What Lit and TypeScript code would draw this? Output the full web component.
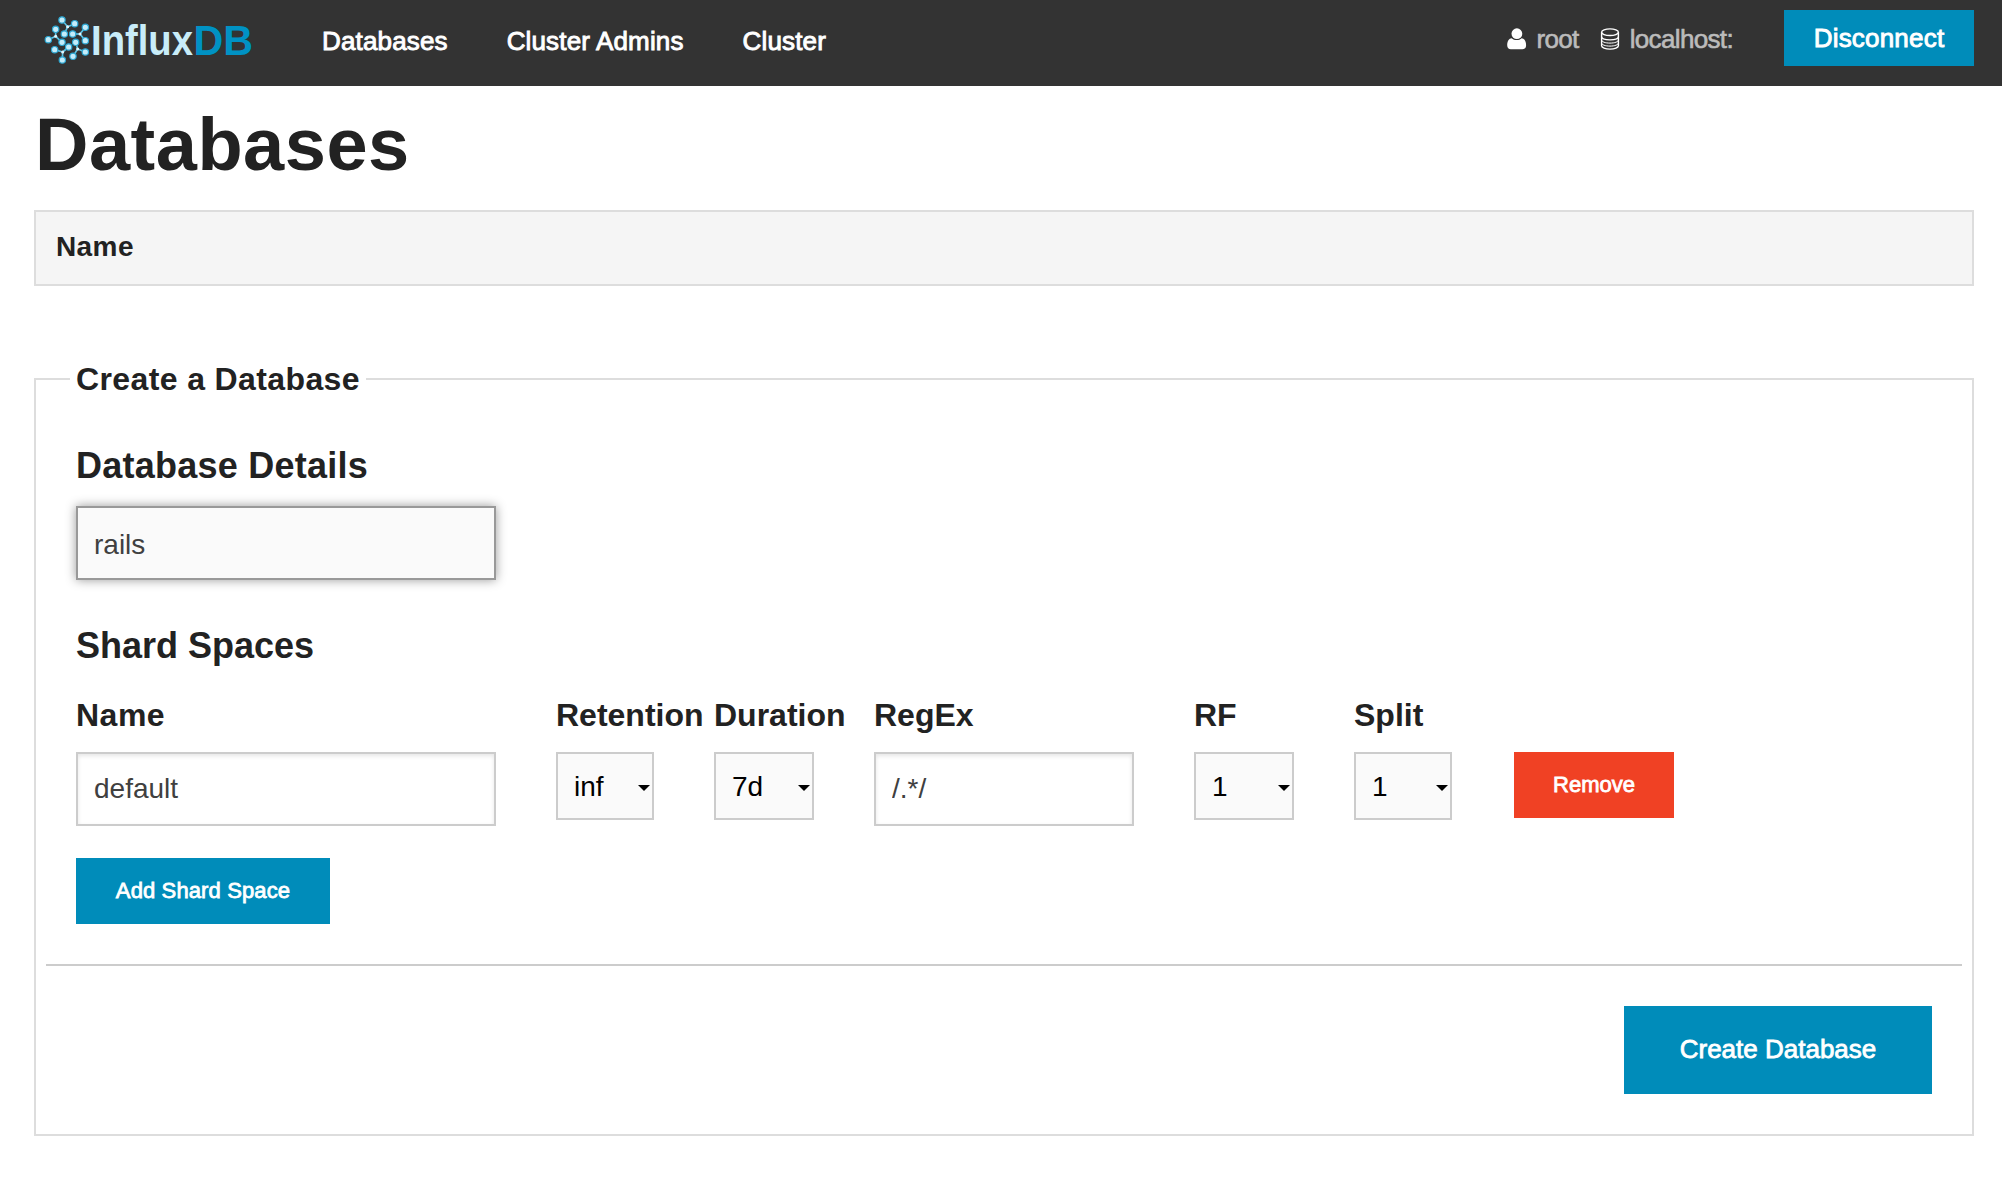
import { LitElement, html, svg, css } from "lit";
import { customElement, property } from "lit/decorators.js";

const baseFont = css`
  :host {
    font-family: "Helvetica Neue", "Liberation Sans", Arial, sans-serif;
  }
`;

// Each branch of the logo mark: a hub joined to three nodes.
const BRANCHES: { hub: [number, number]; nodes: [number, number][] }[] = [
  { hub: [203, 80], nodes: [[186, 60], [224, 71], [193, 102]] },
  { hub: [240, 102], nodes: [[218, 102], [256, 82], [256, 122]] },
  { hub: [167, 109], nodes: [[145, 119], [167, 88], [186, 127]] },
  { hub: [188, 156], nodes: [[164, 149], [206, 141], [187, 180]] },
  { hub: [233, 147], nodes: [[227, 127], [219, 169], [256, 156]] },
];

@customElement("influx-logo")
export class InfluxLogo extends LitElement {
  static styles = [
    baseFont,
    css`
      :host { display: block; width: 216px; height: 60px; }
      .logo { display: block; }
      .word { font-size: 43px; font-weight: 700; }
      .light { fill: #c9edf9; }
      .blue { fill: #0092c4; }
      .link { stroke: #5cc4e6; stroke-width: 5; }
      .node { fill: #c4ecfa; stroke: #2aa6d2; stroke-width: 3.5; }
      .hub { fill: #e2f6fd; }
    `,
  ];

  render() {
    return html`<svg class="logo" width="216" height="60" viewBox="40 10 216 60">
      <g transform="scale(0.33333)">
        ${BRANCHES.map((b) => b.nodes.map((n) => svg`<line class="link" x1=${b.hub[0]} y1=${b.hub[1]} x2=${n[0]} y2=${n[1]}></line>`))}
        ${BRANCHES.map((b) => b.nodes.map((n) => svg`<circle class="node" cx=${n[0]} cy=${n[1]} r="9.5"></circle>`))}
        ${BRANCHES.map((b) => svg`<circle class="hub" cx=${b.hub[0]} cy=${b.hub[1]} r="4.5"></circle>`)}
      </g>
      <text class="word light" x="91" y="54.5" textLength="102" lengthAdjust="spacingAndGlyphs">Influx</text>
      <text class="word blue" x="193.500" y="54.500" textLength="59.500" lengthAdjust="spacingAndGlyphs">DB</text>
    </svg>`;
  }
}

@customElement("top-bar")
export class TopBar extends LitElement {
  static styles = [
    baseFont,
    css`
      :host { display: block; }
      .bar {
        box-sizing: border-box;
        display: flex;
        align-items: flex-start;
        height: 86px;
        padding: 10px 28px 0 40px;
        background: #333;
        color: #fff;
        font-size: 26px;
        line-height: 40px;
      }
      .nav { display: flex; gap: 59px; margin: 11px 0 0 66px; }
      .link { letter-spacing: 0.15px; -webkit-text-stroke: 0.9px #fff; }
      .session { display: flex; align-items: flex-start; margin: 9px 51px 0 auto; color: #bbb; }
      .who { letter-spacing: -0.65px; -webkit-text-stroke: 0.6px #bbb; }
      .icon { display: block; flex: none; margin-top: 9px; }
      .user { margin-right: 9px; }
      .db { margin: 9px 10px 0 21px; }
      .disconnect {
        width: 190px;
        height: 56px;
        padding: 0;
        border: 0;
        background: #008cba;
        color: #fff;
        font: inherit;
        line-height: 56px;
        letter-spacing: 0.2px;
        -webkit-text-stroke: 0.9px #fff;
      }
    `,
  ];

  render() {
    return html`<header class="bar">
      <influx-logo></influx-logo>
      <nav class="nav">
        <span class="link">Databases</span>
        <span class="link">Cluster Admins</span>
        <span class="link">Cluster</span>
      </nav>
      <div class="session">
        <svg class="icon user" width="20" height="22" viewBox="0 0 20 22">
          <path fill="#fff" d="M4.6 10.2C2 10.4.2 13 .2 17.2c0 2.700 1.500 4 3.600 4h11.600c2.200 0 3.700-1.300 3.700-4 0-4.200-1.700-6.800-4.400-7-1.400 1.200-3.100 1.900-5 1.900s-3.700-.7-5.100-1.900z"></path>
          <circle fill="#fff" cx="9.900" cy="5.700" r="5.400"></circle>
        </svg>
        <span class="who">root</span>
        <svg class="icon db" width="20" height="22" viewBox="0 0 20 22" fill="none" stroke="#fff" stroke-width="1.400">
          <ellipse cx="10" cy="4.200" rx="8.400" ry="3.300"></ellipse>
          <path d="M1.600 4.200v13.600c0 1.800 3.700 3.300 8.400 3.300s8.400-1.500 8.400-3.300V4.200"></path>
          <path d="M1.600 8.800c0 1.800 3.700 3.100 8.400 3.100s8.400-1.300 8.400-3.100"></path>
          <path stroke-width="1" d="M1.600 12c0 1.800 3.700 3.100 8.400 3.100s8.400-1.300 8.400-3.100M1.600 15c0 1.800 3.700 3.100 8.400 3.100s8.400-1.300 8.400-3.100"></path>
        </svg>
        <span class="who">localhost:</span>
      </div>
      <button class="disconnect">Disconnect</button>
    </header>`;
  }
}

@customElement("pick-list")
export class PickList extends LitElement {
  @property() value = "";

  static styles = [
    baseFont,
    css`
      :host { display: block; }
      .box {
        box-sizing: border-box;
        display: flex;
        align-items: center;
        justify-content: space-between;
        height: 68px;
        padding: 0 2px 0 16px;
        border: 2px solid #ccc;
        background: #fafafa;
        color: #000;
        font-size: 28px;
        line-height: 62px;
      }
      .value { padding-top: 2px; }
      .arrow { display: block; margin-top: 3px; }
    `,
  ];

  render() {
    return html`<div class="box" role="combobox">
      <span class="value">${this.value}</span>
      <svg class="arrow" width="12" height="6" viewBox="0 0 12 6"><path d="M0 0h12L6 6z"></path></svg>
    </div>`;
  }
}

@customElement("app-root")
export class AppRoot extends LitElement {
  static styles = [
    baseFont,
    css`
      :host { display: block; min-height: 1186px; background: #fff; color: #222; }
      .page { padding: 7px 28px 0 34px; }
      .title { margin: 0; padding-left: 1px; font-size: 74px; line-height: 104px; font-weight: 700; letter-spacing: 0.5px; }
      .table {
        box-sizing: border-box;
        height: 76px;
        margin-top: 13px;
        padding: 15px 20px 17px;
        border: 2px solid #ddd;
        background: #f5f5f5;
        font-size: 28px;
        line-height: 40px;
        font-weight: 700;
        letter-spacing: 0.4px;
      }
      .create { min-width: 0; margin: 73px 0 0; padding: 0; border: 2px solid #ddd; }
      .legend {
        box-sizing: border-box;
        width: 296px;
        margin-left: 34px;
        padding: 0 6px;
        font-size: 32px;
        line-height: 40px;
        font-weight: 700;
        letter-spacing: 0.38px;
        white-space: nowrap;
      }
      .section { padding: 0 40px; }
      .heading { margin: 45px 0 0; font-size: 36px; line-height: 44px; font-weight: 700; letter-spacing: 0.25px; }
      .second { margin-top: 44px; letter-spacing: 0; }
      .field {
        box-sizing: border-box;
        display: block;
        height: 74px;
        margin: 0;
        padding: 0 16px;
        border: 2px solid #ccc;
        border-radius: 0;
        background: #fff;
        box-shadow: inset 0 2px 4px rgba(0, 0, 0, 0.1);
        color: #404040;
        font: inherit;
        font-size: 28px;
        outline: none;
      }
      .wide { width: 420px; }
      .mid { width: 260px; }
      .active {
        margin-top: 18px;
        padding-top: 3px;
        border-color: #999;
        background: #fafafa;
        box-shadow: 0 0 10px #999;
      }
      .shards {
        display: grid;
        grid-template-columns: 480px 158px 160px 320px 160px 160px 160px;
        grid-template-rows: 40px 74px;
        row-gap: 17px;
        margin-top: 27px;
      }
      .label { font-size: 32px; line-height: 40px; font-weight: 700; white-space: nowrap; }
      .label:first-child { letter-spacing: 0.5px; }
      .slim { width: 98px; }
      .full { width: 100px; }
      .button {
        display: block;
        border: 0;
        padding: 0;
        background: #008cba;
        color: #fff;
        font: inherit;
        font-size: 22px;
        height: 66px;
        -webkit-text-stroke: 0.8px #fff;
      }
      .remove { width: 160px; background: #f04124; }
      .add { width: 254px; margin-top: 32px; letter-spacing: 0.12px; }
      .rule { height: 2px; margin: 40px 10px; background: #ccc; }
      .actions { display: flex; justify-content: flex-end; padding: 0 40px 40px; }
      .submit { width: 308px; height: 88px; padding-bottom: 2px; font-size: 26px; }
    `,
  ];

  render() {
    return html`
      <top-bar></top-bar>
      <main class="page">
        <h1 class="title">Databases</h1>
        <div class="table">Name</div>
        <fieldset class="create">
          <legend class="legend">Create a Database</legend>
          <div class="section">
            <h2 class="heading">Database Details</h2>
            <input class="field wide active" .value=${"rails"} />
            <h2 class="heading second">Shard Spaces</h2>
            <div class="shards">
              ${["Name", "Retention", "Duration", "RegEx", "RF", "Split", ""].map((t) => html`<div class="label">${t}</div>`)}
              <input class="field wide" .value=${"default"} />
              <pick-list class="slim" value="inf"></pick-list>
              <pick-list class="full" value="7d"></pick-list>
              <input class="field mid" .value=${"/.*/"} />
              <pick-list class="full" value="1"></pick-list>
              <pick-list class="slim" value="1"></pick-list>
              <button class="button remove">Remove</button>
            </div>
            <button class="button add">Add Shard Space</button>
          </div>
          <div class="rule"></div>
          <div class="actions"><button class="button submit">Create Database</button></div>
        </fieldset>
      </main>
    `;
  }
}
